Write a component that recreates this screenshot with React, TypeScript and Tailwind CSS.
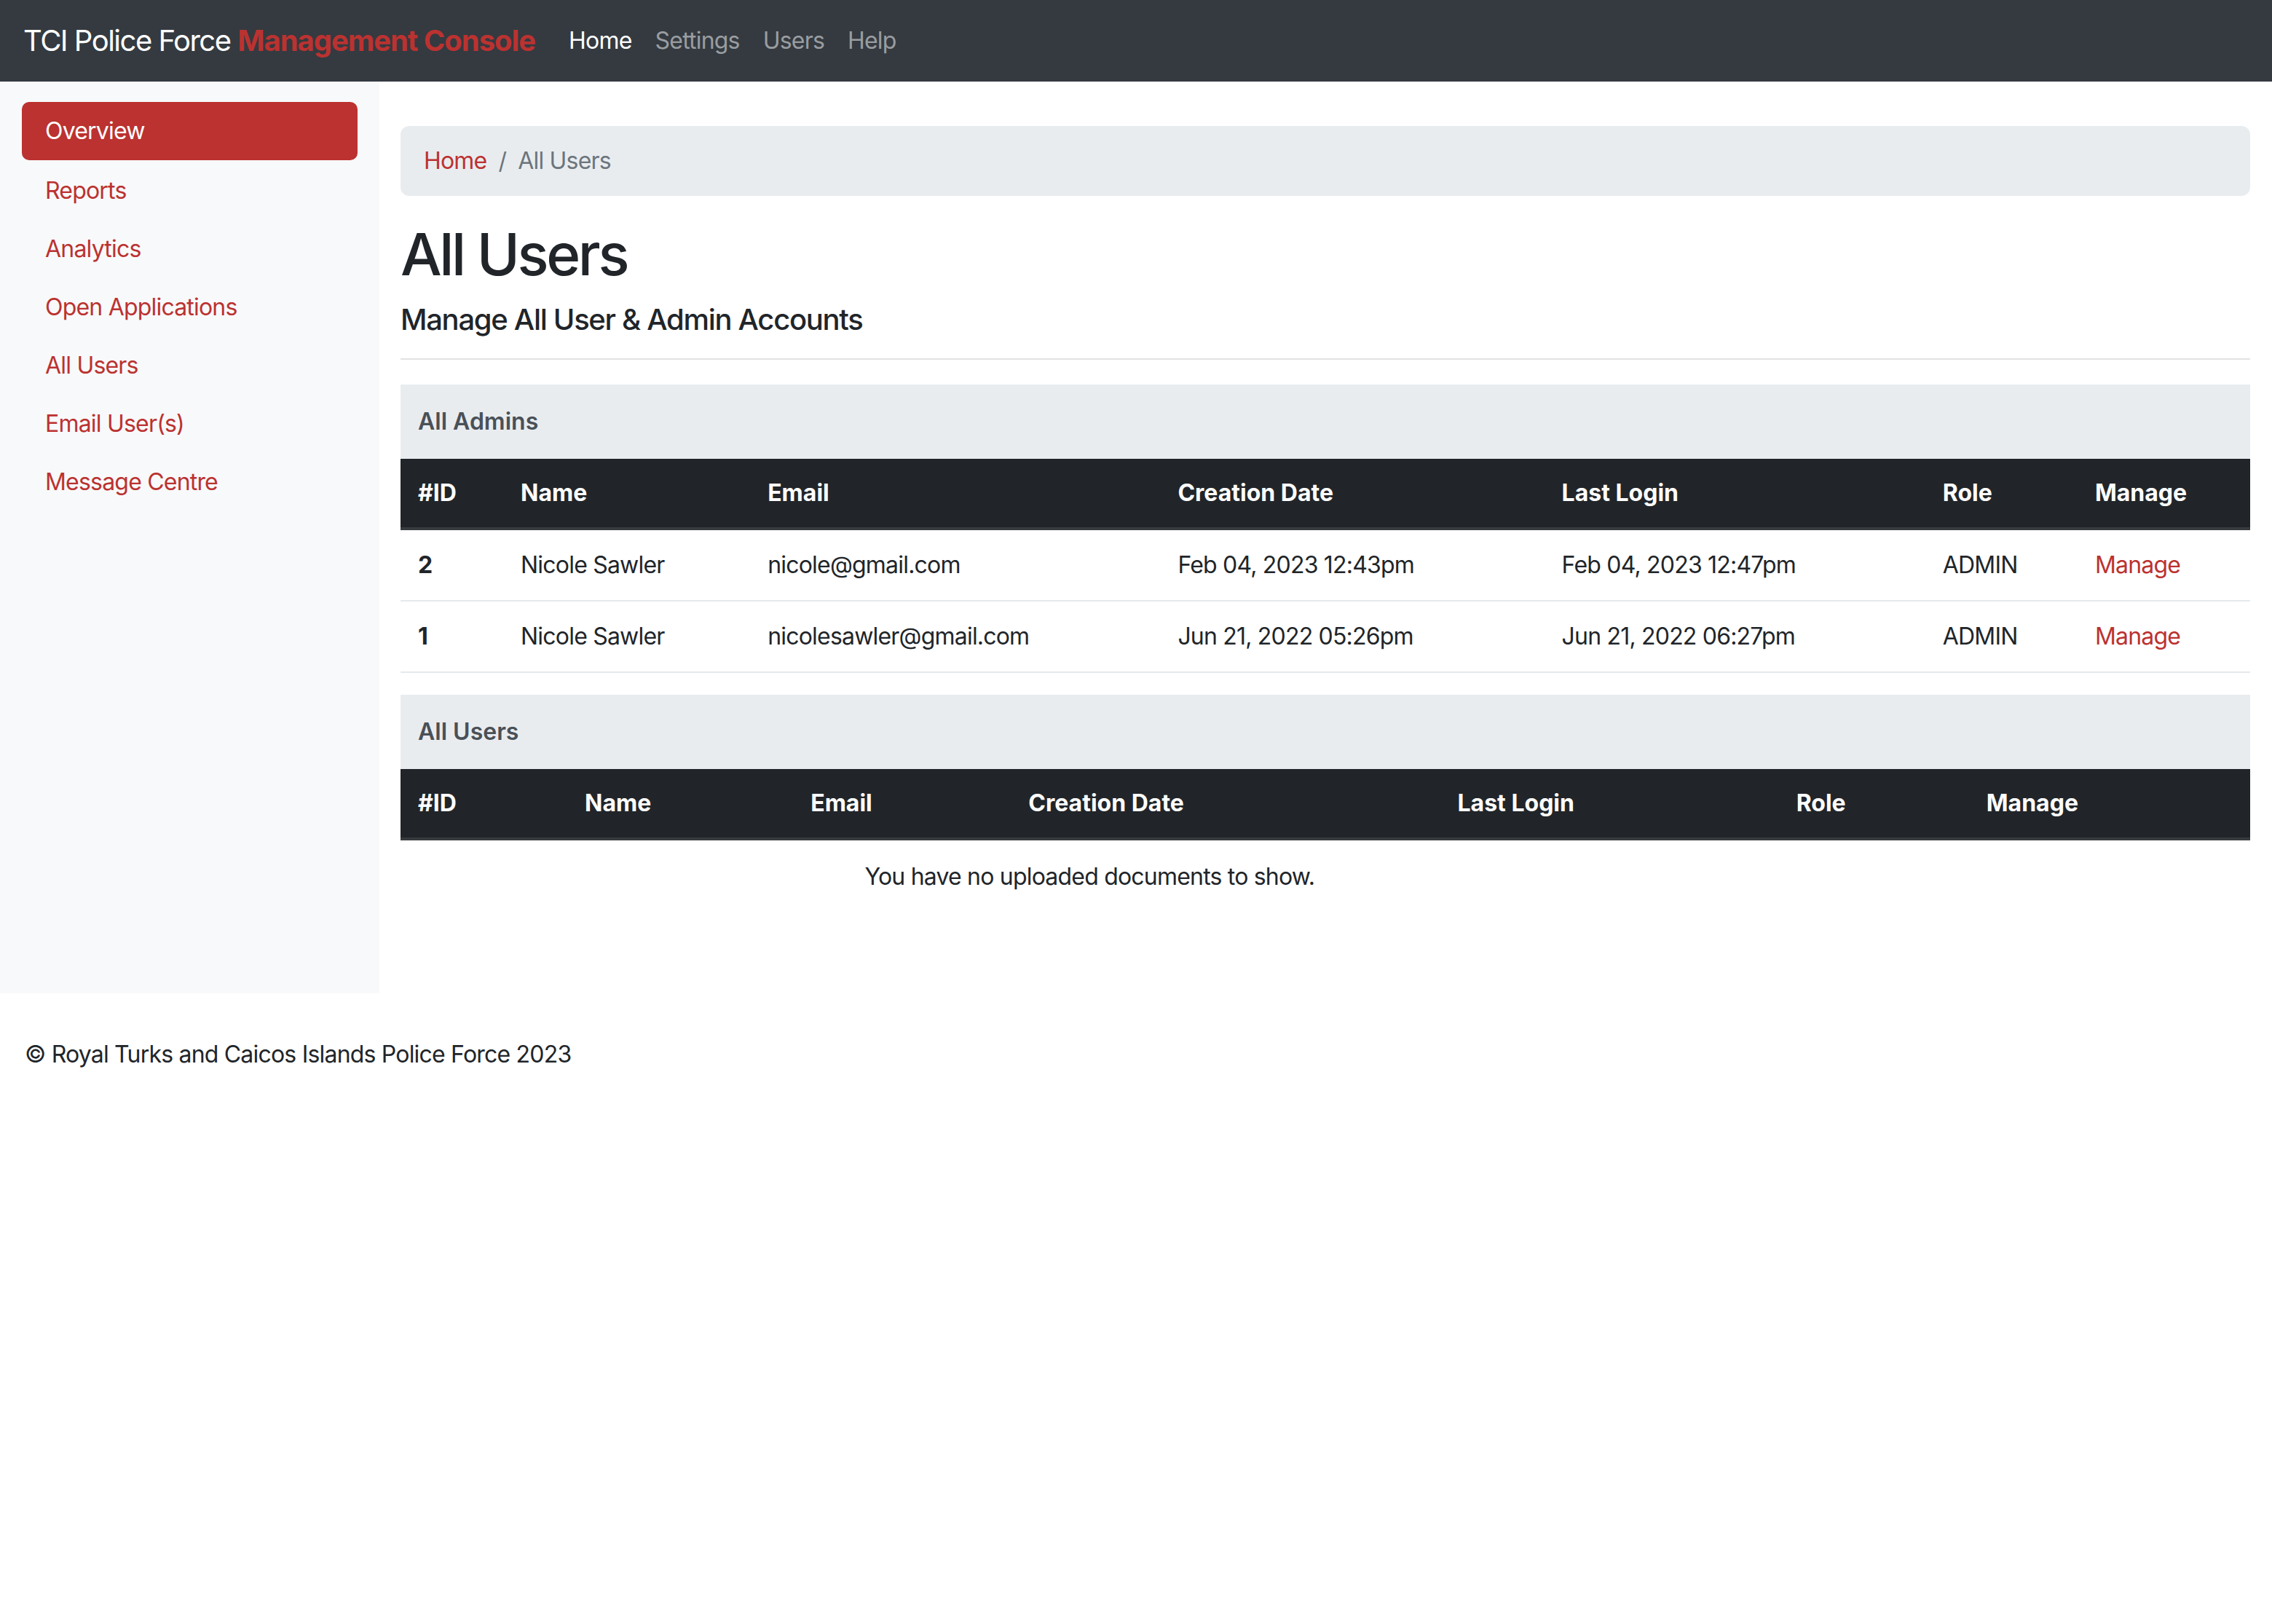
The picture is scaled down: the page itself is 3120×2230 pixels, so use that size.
import React from "react";

const red = "text-[#bb3230]";

const sideLinks = ["Reports", "Analytics", "Open Applications", "All Users", "Email User(s)", "Message Centre"];

const admins = [
  { id: "2", name: "Nicole Sawler", email: "nicole@gmail.com", created: "Feb 04, 2023 12:43pm", last: "Feb 04, 2023 12:47pm", role: "ADMIN" },
  { id: "1", name: "Nicole Sawler", email: "nicolesawler@gmail.com", created: "Jun 21, 2022 05:26pm", last: "Jun 21, 2022 06:27pm", role: "ADMIN" },
];

const Navbar = () => {
  return (
    <div className="h-[112px] bg-[#343a40] flex items-center px-[32px]">
      <div className="text-[40px] text-white tracking-[-1.5px] mr-[46px]">
        TCI Police Force <span className="font-bold tracking-[-1.05px] text-[#bb3230]">Management Console</span>
      </div>
      <div className="flex gap-[32px] text-[32px]">
        <a className="text-white">Home</a>
        <a className="text-[#9a9da0]">Settings</a>
        <a className="text-[#9a9da0]">Users</a>
        <a className="text-[#9a9da0]">Help</a>
      </div>
    </div>
  );
};

const Sidebar = () => {
  return (
    <div className="w-[521px] shrink-0 bg-[#f8f9fa] pt-[28px] px-[30px]">
      <a className="block h-[80px] leading-[80px] px-[32px] rounded-[10px] bg-[#bb3230] text-white text-[32px]">Overview</a>
      <div className="pt-[2px]">
        {sideLinks.map((l) => (
          <a key={l} className={`block h-[80px] leading-[80px] px-[32px] text-[32px] ${red}`}>
            {l}
          </a>
        ))}
      </div>
    </div>
  );
};

const CardHeader = ({ title }: { title: string }) => (
  <div className="bg-[#e9ecef] px-[24px] py-[27px] leading-[48px] text-[32px] font-semibold tracking-normal text-[#495057]">{title}</div>
);

const Th = ({ w, children }: { w: string; children: React.ReactNode }) => (
  <th className={`${w} text-left font-bold tracking-normal text-white px-[24px] py-[23px] leading-[48px] border-b-[4px] border-[#373b3e]`}>{children}</th>
);

const Td = ({ children, className = "" }: { children: React.ReactNode; className?: string }) => (
  <td className={`px-[24px] py-[24px] leading-[48px] border-b-[2px] border-[#e6e9ec] ${className}`}>{children}</td>
);

const Main = () => {
  return (
    <div className="flex-1 pl-[29px] pr-[30px] pt-[61px] pb-[110px]">
      <div className="bg-[#e9ecef] rounded-[12px] px-[32px] py-[24px] leading-[48px] text-[32px]">
        <span className={red}>Home</span>
        <span className="text-[#6c757d] px-[16px]">/</span>
        <span className="text-[#6c757d]">All Users</span>
      </div>
      <h1 className="mt-[32px] text-[80px] leading-[96px] font-medium text-[#212529] tracking-[-3.4px]">All Users</h1>
      <h5 className="mt-[18px] text-[40px] leading-[48px] font-medium text-[#212529] tracking-[-1.3px]">Manage All User &amp; Admin Accounts</h5>
      <hr className="mt-[29px] mb-[34px] border-t-[2px] border-[#e3e3e3]" />

      <CardHeader title="All Admins" />
      <table className="w-full table-fixed border-collapse text-[32px] text-[#212529]">
        <thead className="bg-[#212529]">
          <tr>
            <Th w="w-[141px]">#ID</Th>
            <Th w="w-[339px]">Name</Th>
            <Th w="w-[563px]">Email</Th>
            <Th w="w-[527px]">Creation Date</Th>
            <Th w="w-[523px]">Last Login</Th>
            <Th w="w-[209px]">Role</Th>
            <Th w="w-[237px]">Manage</Th>
          </tr>
        </thead>
        <tbody>
          {admins.map((a) => (
            <tr key={a.id}>
              <Td className="font-bold tracking-normal">{a.id}</Td>
              <Td>{a.name}</Td>
              <Td>{a.email}</Td>
              <Td>{a.created}</Td>
              <Td>{a.last}</Td>
              <Td>{a.role}</Td>
              <Td className={red}>Manage</Td>
            </tr>
          ))}
        </tbody>
      </table>

      <div className="mt-[30px]">
        <CardHeader title="All Users" />
        <table className="w-full table-fixed border-collapse text-[32px] text-[#212529]">
          <thead className="bg-[#212529]">
            <tr>
              <Th w="w-[229px]">#ID</Th>
              <Th w="w-[310px]">Name</Th>
              <Th w="w-[299px]">Email</Th>
              <Th w="w-[589px]">Creation Date</Th>
              <Th w="w-[465px]">Last Login</Th>
              <Th w="w-[261px]">Role</Th>
              <Th w="w-[386px]">Manage</Th>
            </tr>
          </thead>
          <tbody>
            <tr>
              <td colSpan={5} className="text-center px-[24px] py-[26px] leading-[48px]">
                You have no uploaded documents to show.
              </td>
              <td />
              <td />
            </tr>
          </tbody>
        </table>
      </div>
    </div>
  );
};

export default function App() {
  return (
    <div className="min-h-[2230px] bg-white font-['Inter',sans-serif] tracking-[-0.8px] text-[#212529]">
      <Navbar />
      <div className="flex">
        <Sidebar />
        <Main />
      </div>
      <footer className="px-[34px] pt-[60px] text-[32px] leading-[48px] text-[#212529]">
        © Royal Turks and Caicos Islands Police Force 2023
      </footer>
    </div>
  );
}
